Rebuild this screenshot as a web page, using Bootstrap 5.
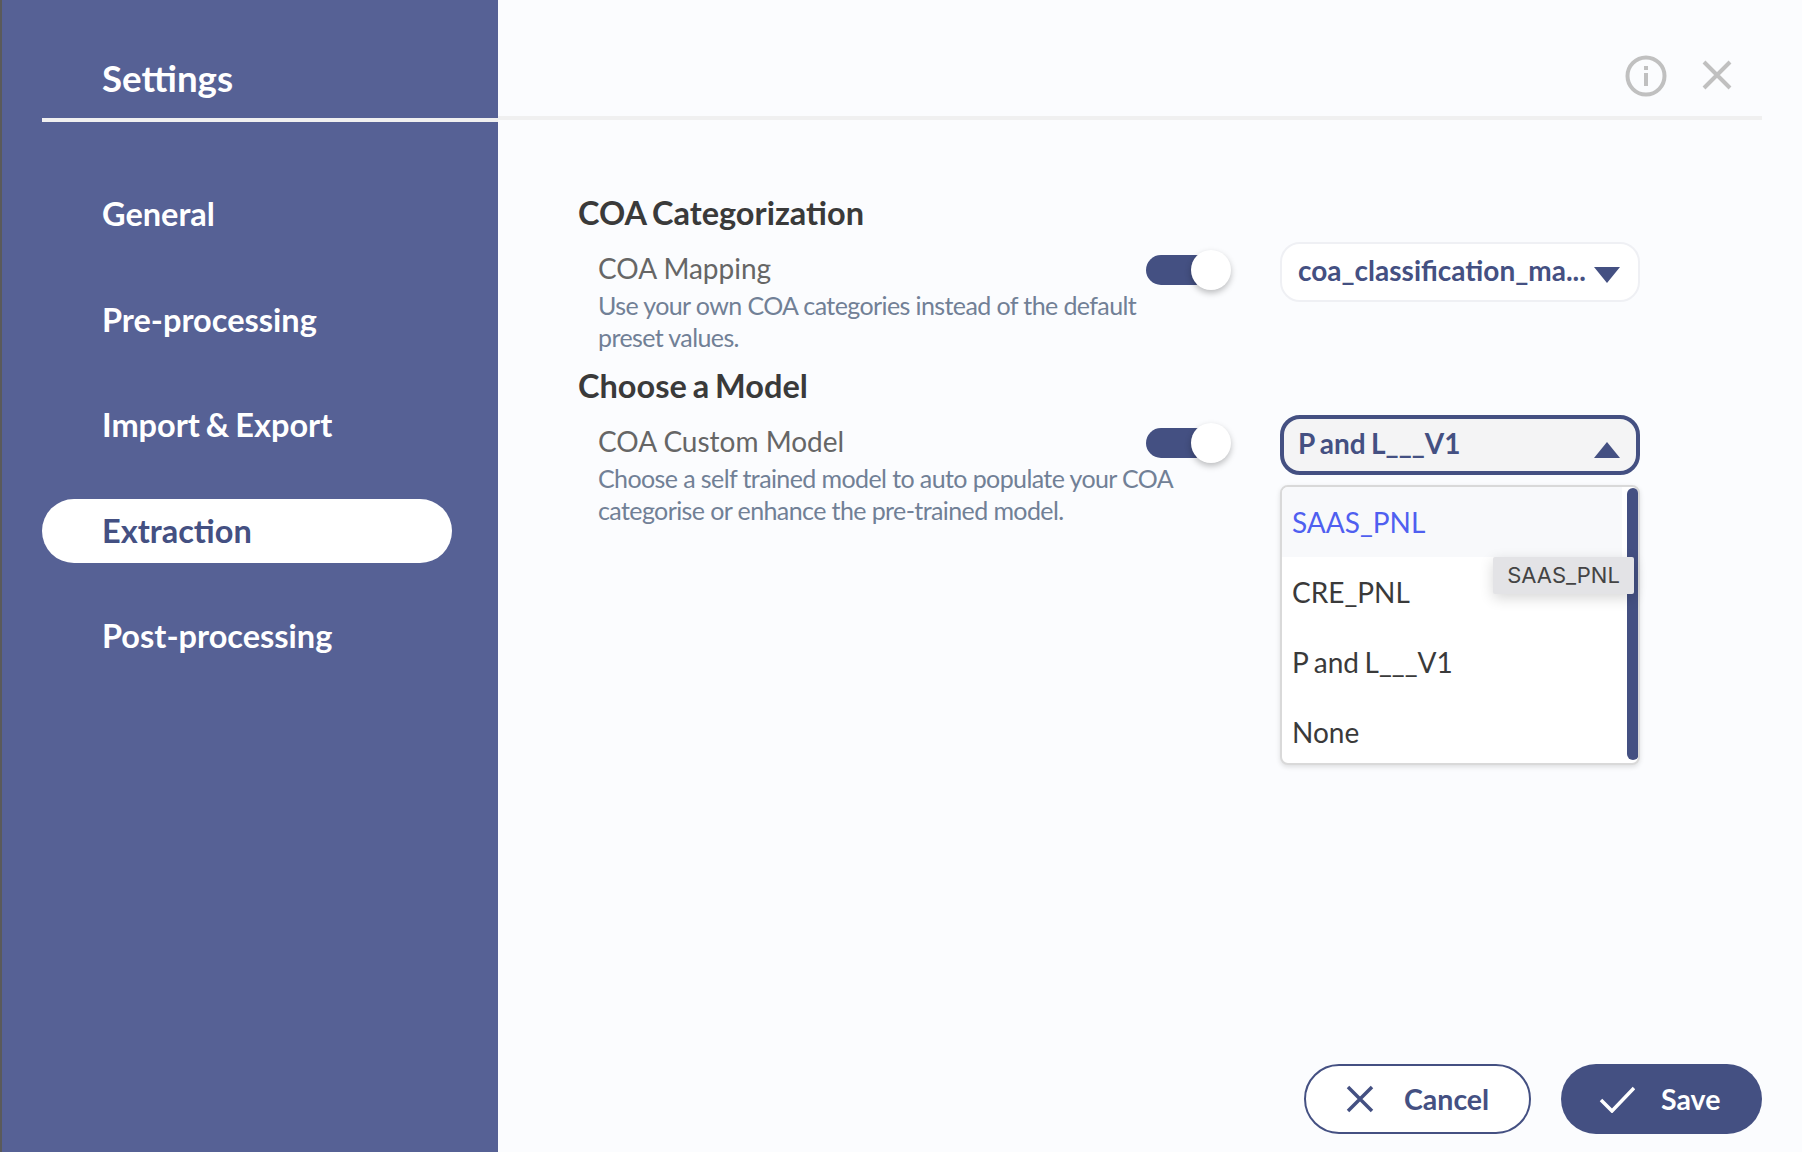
<!DOCTYPE html>
<html lang="en">
<head>
    <meta charset="UTF-8">
    <title>Settings</title>
    <link href="https://cdn.jsdelivr.net/npm/bootstrap@5.3.0/dist/css/bootstrap.min.css" rel="stylesheet">
    <style>
        html, body { height: 100%; }
        body { font-family: "Lato", "Liberation Sans", sans-serif; background: #fbfcfe; overflow: hidden; }
        .app-shell { height: 1152px; }
        .side-panel { width: 498px; background: #566195; border-left: 2px solid #5a5a5a; flex-shrink: 0; }
        .side-head { height: 122px; margin-left: 40px; border-bottom: 4px solid #f0f0f0; padding: 54px 0 0 60px; color: #fff; font-size: 36.7px; line-height: 48px; font-weight: 700; }
        .side-nav { padding-top: 60px; padding-left: 40px; gap: 41.5px; }
        .side-link { width: 410px; height: 64px; padding-left: 60px; border-radius: 32px; color: #fff; font-size: 32.5px; font-weight: 700; line-height: 64px; word-spacing: -2px; text-decoration: none; }
        .side-link.is-active { background: #fff; color: #445082; }
        .main-head { height: 120px; margin-right: 40px; border-bottom: 4px solid #f0f0f0; padding-top: 55px; padding-right: 30px; gap: 35px; }
        .close-icon { margin-top: 5px; }
        .main-body { padding: 72px 0 0 80px; }
        .section-title { font-size: 32.5px; line-height: 42px; font-weight: 700; color: #3a3a3a; margin: 0; word-spacing: -2px; }
        .setting-row { position: relative; padding-left: 20px; height: 131px; }
        .setting-row.last-row { height: 160px; }
        .setting-text { width: 548px; }
        .setting-label { font-size: 28px; line-height: 36px; color: #666; padding-top: 16px; }
        .setting-desc { width: 590px; font-size: 25px; line-height: 32px; letter-spacing: -.6px; color: #718096; margin-top: 3px; }
        .toggle-track { position: relative; width: 65px; height: 30px; border-radius: 15px; background: #445082; margin-top: 21px; flex-shrink: 0; }
        .toggle-knob { position: absolute; left: 45px; top: -5px; width: 40px; height: 40px; border-radius: 50%; background: #fff; box-shadow: 0 3px 6px rgba(0,0,0,.25); }
        .select-box { position: relative; width: 360px; height: 60px; margin-left: 69px; margin-top: 8px; flex-shrink: 0; border: 2px solid #eff0f4; border-radius: 20px; background: #fff; color: #445082; font-size: 28px; font-weight: 700; padding: 0 18px 0 16px; }
        .select-box.is-open { border: 4px solid #445082; background: #f4f4f5; padding: 0 16px 0 14px; }
        .select-text { white-space: nowrap; word-spacing: -1.5px; padding-bottom: 4px; }
        .caret-down { width: 0; height: 0; border-left: 13px solid transparent; border-right: 13px solid transparent; border-top: 16px solid #445082; margin-left: auto; margin-top: 5px; }
        .caret-up { width: 0; height: 0; border-left: 13px solid transparent; border-right: 13px solid transparent; border-bottom: 16px solid #445082; margin-left: auto; margin-top: 9px; }
        .model-menu { display: block; position: absolute; left: -4px; top: 66px; width: 360px; height: 280px; padding: 0; border: 2px solid #d9d9d9; border-radius: 8px; background: #fff; box-shadow: 0 2px 5px rgba(0,0,0,.12); overflow: hidden; }
        .model-item { height: 70px; line-height: 70px; padding: 0 10px; font-size: 28px; font-weight: 400; word-spacing: -1.5px; color: #3a3a3a; }
        .model-item.is-hover { background: #f8f9fb; color: #4f5ff0; width: 340px; }
        .menu-scroll { position: absolute; right: -1px; top: 1px; bottom: 3px; width: 12px; border-radius: 6px; background: #445082; }
        .hover-tip { position: absolute; left: 209px; top: 138px; width: 141px; height: 37px; line-height: 37px; text-align: center; font-family: "Inter", sans-serif; font-size: 22px; font-weight: 400; color: #444; background: #e3e3e6; border-radius: 2px; box-shadow: 0 4px 14px rgba(0,0,0,.16); z-index: 1001; }
        .action-bar { position: absolute; right: 40px; bottom: 18px; gap: 30px; }
        .action-btn { height: 70px; border-radius: 35px; font-size: 28.5px; font-weight: 700; display: flex; align-items: center; padding: 0; }
        .action-cancel { width: 227px; background: #fff; border: 2px solid #445082; color: #445082; padding-left: 40px; gap: 30px; }
        .action-save { width: 201px; background: #445082; border: 0; color: #fff; padding-left: 38px; gap: 26px; }
        .main-panel { position: relative; }
    </style>
</head>
<body>
    <div class="app-shell d-flex">
        <!-- Sidebar -->
        <div class="side-panel">
            <div class="side-head">Settings</div>
            <nav class="side-nav d-flex flex-column">
                <a class="side-link" href="#">General</a>
                <a class="side-link" href="#">Pre-processing</a>
                <a class="side-link" href="#">Import &amp; Export</a>
                <a class="side-link is-active" href="#">Extraction</a>
                <a class="side-link" href="#">Post-processing</a>
            </nav>
        </div>

        <!-- Content -->
        <div class="main-panel flex-grow-1">
            <div class="main-head d-flex justify-content-end align-items-start">
                <svg width="42" height="42" viewBox="0 0 42 42" fill="none" stroke="#c0c0c0" stroke-width="4"><circle cx="21" cy="21" r="18.5"/><path d="M21 18v13M21 11v4"/></svg>
                <svg class="close-icon" width="30" height="30" viewBox="0 0 30 30" fill="none" stroke="#c0c0c0" stroke-width="4"><path d="M2 2l26 26M28 2L2 28"/></svg>
            </div>

            <div class="main-body">
                <h2 class="section-title">COA Categorization</h2>
                <div class="setting-row d-flex align-items-start">
                    <div class="setting-text">
                        <div class="setting-label">COA Mapping</div>
                        <div class="setting-desc">Use your own COA categories instead of the default preset values.</div>
                    </div>
                    <div class="toggle-track"><span class="toggle-knob"></span></div>
                    <div class="select-box d-flex align-items-center">
                        <span class="select-text">coa_classification_ma...</span>
                        <span class="caret-down"></span>
                    </div>
                </div>

                <h2 class="section-title">Choose a Model</h2>
                <div class="setting-row last-row d-flex align-items-start">
                    <div class="setting-text">
                        <div class="setting-label">COA Custom Model</div>
                        <div class="setting-desc">Choose a self trained model to auto populate your COA categorise or enhance the pre-trained model.</div>
                    </div>
                    <div class="toggle-track"><span class="toggle-knob"></span></div>
                    <div class="select-box is-open d-flex align-items-center">
                        <span class="select-text">P and L___V1</span>
                        <span class="caret-up"></span>
                        <div class="model-menu dropdown-menu">
                            <div class="model-item is-hover">SAAS_PNL</div>
                            <div class="model-item">CRE_PNL</div>
                            <div class="model-item">P and L___V1</div>
                            <div class="model-item">None</div>
                            <span class="menu-scroll"></span>
                        </div>
                        <div class="hover-tip">SAAS_PNL</div>
                    </div>
                </div>
            </div>

            <div class="action-bar d-flex">
                <button type="button" class="btn action-btn action-cancel">
                    <svg width="28" height="28" viewBox="0 0 28 28" fill="none" stroke="#445082" stroke-width="3.5"><path d="M2 2l24 24M26 2L2 26"/></svg>
                    Cancel
                </button>
                <button type="button" class="btn action-btn action-save">
                    <svg width="36" height="28" viewBox="0 0 36 28" fill="none" stroke="#fff" stroke-width="3.5"><path d="M2 15l11 11L35 3"/></svg>
                    Save
                </button>
            </div>
        </div>
    </div>
    <script src="https://cdn.jsdelivr.net/npm/bootstrap@5.3.0/dist/js/bootstrap.bundle.min.js"></script>
</body>
</html>
